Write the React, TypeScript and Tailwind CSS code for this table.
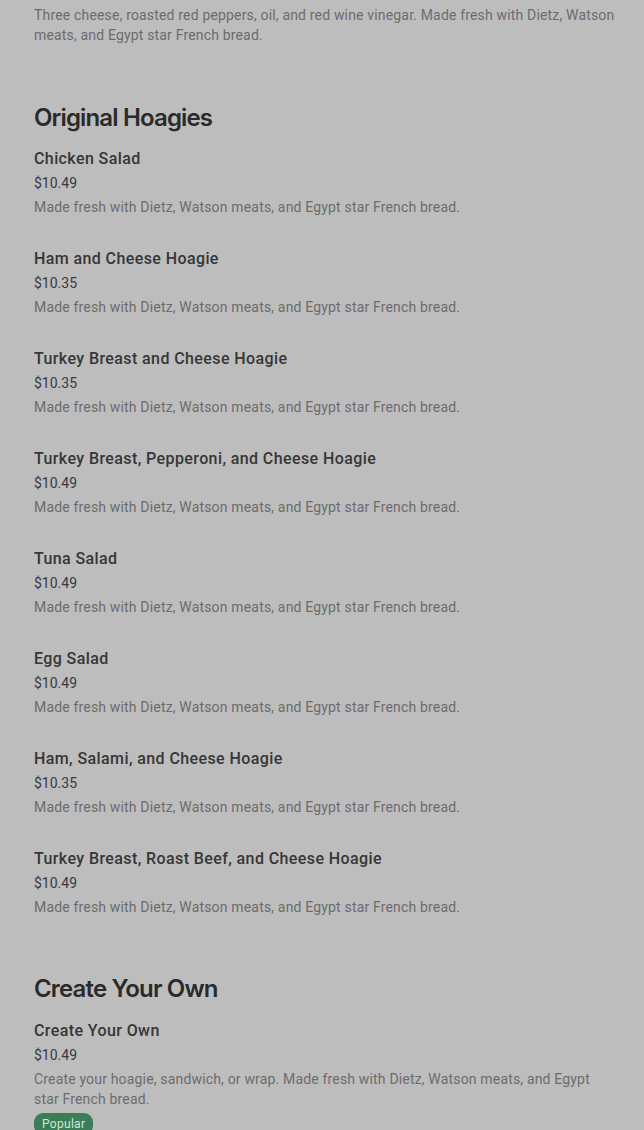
import React from "react";

const DESC = "Made fresh with Dietz, Watson meats, and Egypt star French bread.";

const items: { name: string; price: string }[] = [
  { name: "Chicken Salad", price: "$10.49" },
  { name: "Ham and Cheese Hoagie", price: "$10.35" },
  { name: "Turkey Breast and Cheese Hoagie", price: "$10.35" },
  { name: "Turkey Breast, Pepperoni, and Cheese Hoagie", price: "$10.49" },
  { name: "Tuna Salad", price: "$10.49" },
  { name: "Egg Salad", price: "$10.49" },
  { name: "Ham, Salami, and Cheese Hoagie", price: "$10.35" },
  { name: "Turkey Breast, Roast Beef, and Cheese Hoagie", price: "$10.49" },
];

function Item({ name, price, desc, badge }: { name: string; price: string; desc: string; badge?: boolean }) {
  return (
    <div className="flex flex-col">
      <div className="pt-px text-[16px] leading-6 font-medium tracking-[0.4px] text-[#363636]">{name}</div>
      <div className="mt-[2px] text-[14px] leading-5 text-[#3a3a3a]">{price}</div>
      <div className="mt-1 text-[14px] leading-5 tracking-[0.17px] text-[#6c6c6c]">{desc}</div>
      {badge && (
        <div className="mt-1 self-start rounded-[9px] bg-[#3a7d56] px-2 text-[12px] leading-[22px] tracking-[0.3px] text-[#d6e6dc]">
          Popular
        </div>
      )}
    </div>
  );
}

export default function App() {
  return (
    <div
      className="min-h-[1130px] w-full overflow-hidden bg-[#bdbdbd] pl-[34px] pr-[26px] pt-[5px]"
      style={{ fontFamily: "Roboto, 'Liberation Sans', sans-serif" }}
    >
      <div className="text-[14px] leading-5 tracking-[0.17px] text-[#6c6c6c]">
        Three cheese, roasted red peppers, oil, and red wine vinegar. Made fresh with Dietz, Watson meats, and Egypt star French bread.
      </div>

      <h2
        className="mt-[57px] text-[24px] leading-8 font-semibold tracking-[-0.85px] text-[#2a2a2a]"
        style={{ fontFamily: "Inter, 'Liberation Sans', sans-serif" }}
      >
        Original Hoagies
      </h2>
      <div className="mt-[12px] flex flex-col gap-[29px]">
        {items.map((it) => (
          <Item key={it.name} name={it.name} price={it.price} desc={DESC} />
        ))}
      </div>

      <h2
        className="mt-[56px] text-[24px] leading-8 font-semibold tracking-[-0.85px] text-[#2a2a2a]"
        style={{ fontFamily: "Inter, 'Liberation Sans', sans-serif" }}
      >
        Create Your Own
      </h2>
      <div className="mt-[13px] flex flex-col">
        <Item
          name="Create Your Own"
          price="$10.49"
          desc="Create your hoagie, sandwich, or wrap. Made fresh with Dietz, Watson meats, and Egypt star French bread."
          badge
        />
      </div>
    </div>
  );
}
